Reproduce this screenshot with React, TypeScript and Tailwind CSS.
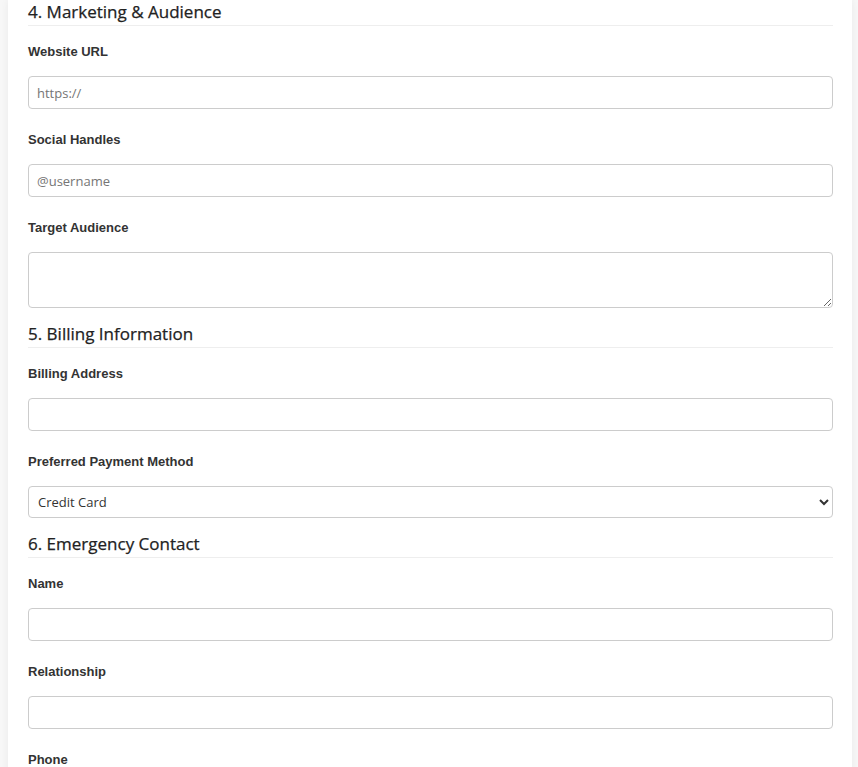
import React from 'react'

const labelCls = "block text-[13px] leading-[20px] pt-[1px] font-bold text-[#333] font-['Liberation_Sans',Arial,sans-serif] mb-[14px]"
const inputCls = "block w-full h-[33px] px-[8px] bg-white border border-[#ccc] rounded-[4px] text-[13px] text-[#333] placeholder:text-[#757575] font-['Open_Sans',sans-serif] outline-none"

function Field({ label, children }: { label: string; children: React.ReactNode }) {
  return (
    <div>
      <label className={labelCls}>{label}</label>
      {children}
    </div>
  )
}

function Section({ title, children }: { title: string; children: React.ReactNode }) {
  return (
    <section>
      <h3 className="text-[17px] leading-[24px] pb-[1px] font-normal text-[#222] border-b border-[#eee] font-['Open_Sans',sans-serif] [-webkit-text-stroke:0.25px_#222]">
        {title}
      </h3>
      <div className="flex flex-col gap-[20px] pt-[15px] pb-[14px]">{children}</div>
    </section>
  )
}

export default function App() {
  return (
    <div className="min-h-screen bg-[#f7f7f7] overflow-hidden">
      <div className="ml-[8px] mr-[6px] bg-white shadow-[0_0_8px_rgba(0,0,0,0.06)] pl-[20px] pr-[19px] pb-[20px]">
        <Section title="4. Marketing & Audience">
          <Field label="Website URL">
            <input type="text" placeholder="https://" className={inputCls} />
          </Field>
          <Field label="Social Handles">
            <input type="text" placeholder="@username" className={inputCls} />
          </Field>
          <Field label="Target Audience">
            <textarea className="block w-full h-[56px] px-[8px] py-[6px] bg-white border border-[#ccc] rounded-[4px] text-[13px] text-[#333] font-['Open_Sans',sans-serif] outline-none" />
          </Field>
        </Section>

        <Section title="5. Billing Information">
          <Field label="Billing Address">
            <input type="text" className={inputCls} />
          </Field>
          <Field label="Preferred Payment Method">
            <select
              defaultValue="Credit Card"
              className="block w-full h-[32px] pl-[5px] pr-[4px] bg-white border border-[#ccc] rounded-[4px] text-[13px] text-[#333] font-['Open_Sans',sans-serif] outline-none"
            >
              <option>Credit Card</option>
              <option>Bank Transfer</option>
              <option>PayPal</option>
            </select>
          </Field>
        </Section>

        <Section title="6. Emergency Contact">
          <Field label="Name">
            <input type="text" className={inputCls} />
          </Field>
          <Field label="Relationship">
            <input type="text" className={inputCls} />
          </Field>
          <Field label="Phone">
            <input type="text" className={inputCls} />
          </Field>
        </Section>
      </div>
    </div>
  )
}
